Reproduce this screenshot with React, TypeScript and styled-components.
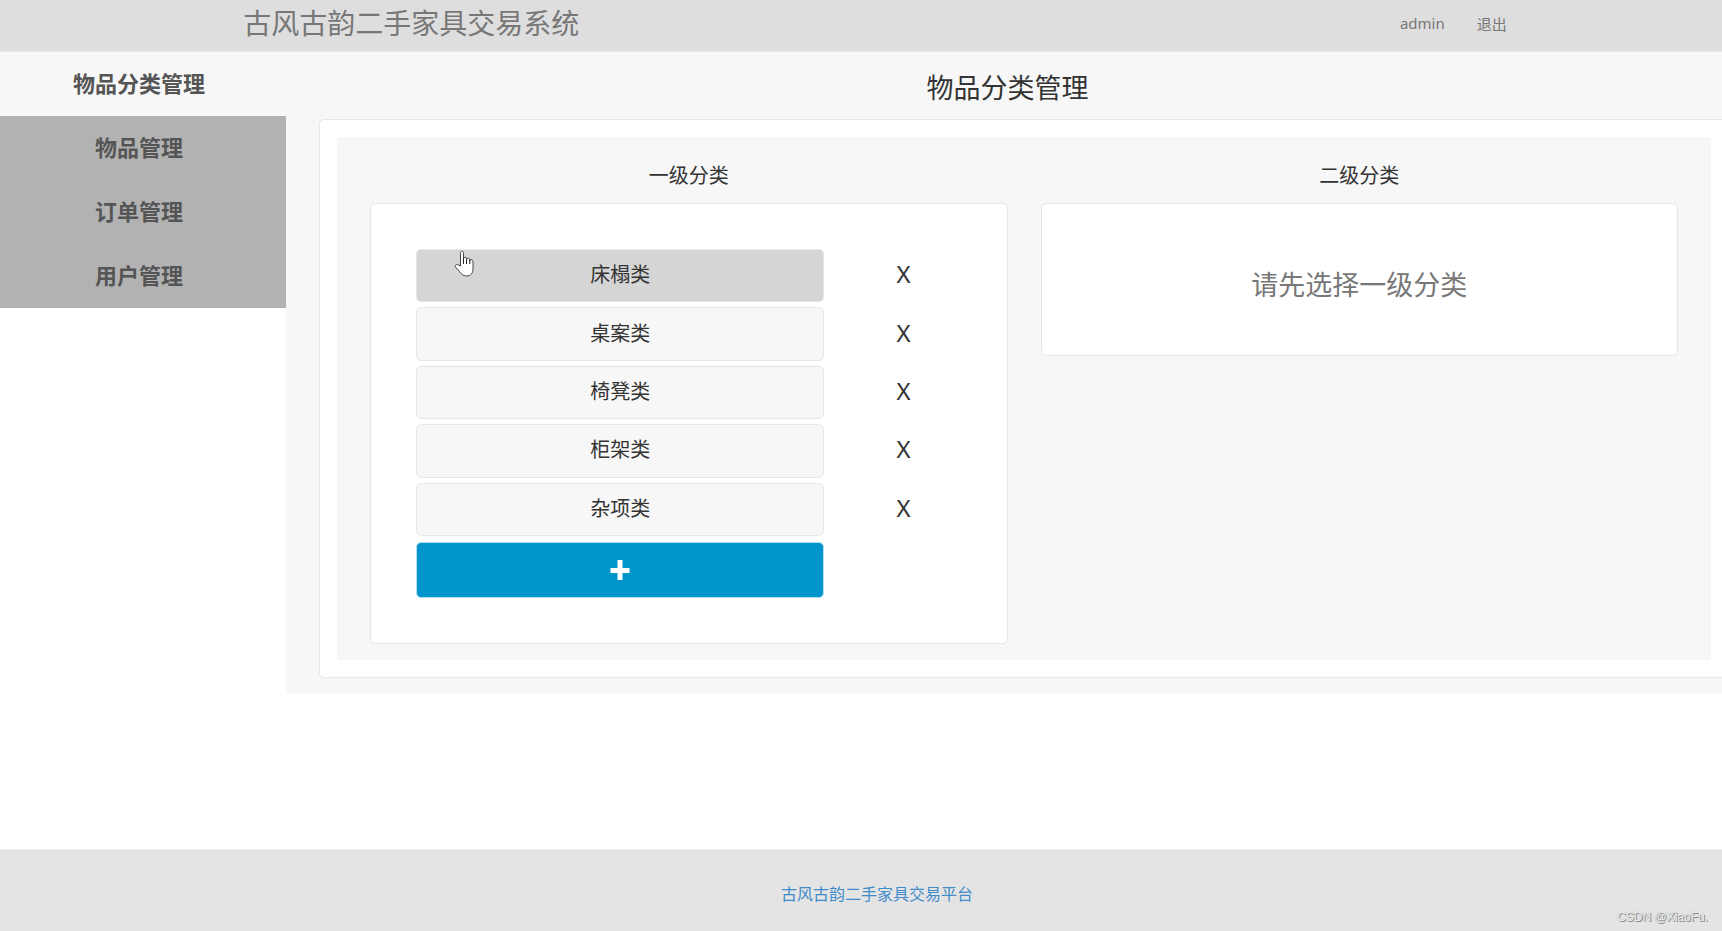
import React, { useState } from "react";
import styled, { createGlobalStyle } from "styled-components";

const GlobalStyle = createGlobalStyle`
  *, *::before, *::after { box-sizing: border-box; }
  body {
    margin: 0;
    background: #fff;
    color: #333;
    font-family: "Noto Sans", "Noto Sans CJK SC", sans-serif;
    font-size: 16px;
  }
  h1, h2, p, ul { margin: 0; padding: 0; font-weight: 400; }
  ul { list-style: none; }
  a { color: inherit; text-decoration: none; }
  button { font: inherit; color: inherit; cursor: pointer; }
`;

const Page = styled.div`
  display: flex;
  flex-direction: column;
  min-height: 100vh;
  overflow: hidden;
`;

const Header = styled.header`
  height: 52px;
  background: #dedede;
  border-bottom: 1px solid #e7e7e7;
  color: #777;
`;

const HeaderInner = styled.div`
  display: flex;
  align-items: center;
  justify-content: space-between;
  width: 75%;
  height: 46px;
  margin: 0 auto;
  padding-left: 28px;
`;

const Brand = styled.a`
  font-size: 28px;
  line-height: 46px;
`;

const UserNav = styled.nav`
  display: flex;
  gap: 32px;
  font-size: 15px;
`;

const Body = styled.div`
  display: flex;
  align-items: flex-start;
`;

const Sidebar = styled.nav`
  flex: 0 0 286px;
`;

const SideLink = styled.a<{ $active?: boolean }>`
  display: block;
  height: 64px;
  padding-right: 8px;
  background: ${(p) => (p.$active ? "#f7f7f7" : "#b2b2b2")};
  color: #555;
  font-size: 22px;
  font-weight: 700;
  line-height: 62px;
  text-align: center;
`;

const Main = styled.main`
  flex: 1;
  min-width: 0;
  margin-right: -7px;
  padding-bottom: 16px;
  background: #f7f7f7;
`;

const PageTitle = styled.h1`
  padding-top: 16px;
  height: 67px;
  font-size: 27px;
  line-height: 40px;
  text-align: center;
`;

const Frame = styled.section`
  margin-left: 33px;
  padding: 17px;
  background: #fff;
  border: 1px solid #e7e7e7;
  border-radius: 5px;
`;

const Columns = styled.div`
  display: grid;
  grid-template-columns: 1fr 1fr;
  align-items: start;
  gap: 33px;
  padding: 23px 33px 16px;
  background: #f7f7f7;
`;

const ColumnTitle = styled.h2`
  margin-bottom: 11px;
  font-size: 20px;
  line-height: 32px;
  text-align: center;
`;

const Panel = styled.div`
  padding: 45px;
  background: #fff;
  border: 1px solid #e7e7e7;
  border-radius: 5px;
`;

const Notice = styled.p`
  padding: 16px 0 5px;
  color: #777;
  font-size: 27px;
  line-height: 40px;
  text-align: center;
`;

const CategoryList = styled.ul`
  display: grid;
  grid-auto-rows: 1fr;
  gap: 5px;
  min-height: 287px;
  margin-bottom: 6px;
`;

const Row = styled.li`
  display: grid;
  grid-template-columns: 17fr 5fr;
  column-gap: 17px;
`;

const CategoryButton = styled.button<{ $selected: boolean }>`
  padding: 0 0 4px;
  background: ${(p) => (p.$selected ? "#d5d5d5" : "#f7f7f7")};
  border: 1px solid #e7e7e7;
  border-radius: 5px;
  font-size: 20px;
`;

const RemoveButton = styled.button`
  padding: 0 0 4px 4px;
  background: none;
  border: 0;
  font-size: 24px;
`;

const AddButton = styled.button`
  display: flex;
  align-items: center;
  justify-content: center;
  height: 56px;
  background: #0096cc;
  border: 1px solid #b5e0f0;
  border-radius: 5px;
`;

const Footer = styled.footer`
  display: flex;
  flex-direction: column;
  height: 82px;
  margin-top: auto;
  padding-top: 32px;
  background: #e4e4e4;
  border-top: 1px solid #eee;
  text-align: center;
`;

const FooterLink = styled.a`
  align-self: center;
  padding-left: 32px;
  color: #428bca;
  line-height: 24px;
`;

const Credit = styled.small`
  align-self: flex-end;
  margin-right: 14px;
  color: #eee;
  font-family: "Liberation Sans", sans-serif;
  font-size: 12px;
  line-height: 22px;
  text-shadow: 1px 1px 0 #888, 0 0 1px #999;
`;

const Pointer = styled.svg`
  position: absolute;
  top: 250px;
  left: 454px;
  pointer-events: none;
`;

const sections = ["物品分类管理", "物品管理", "订单管理", "用户管理"];
const categories = ["床榻类", "桌案类", "椅凳类", "柜架类", "杂项类"];

export default function App() {
  const [selected, setSelected] = useState(0);

  return (
    <Page>
      <GlobalStyle />
      <Header>
        <HeaderInner>
          <Brand href="#">古风古韵二手家具交易系统</Brand>
          <UserNav>
            <a href="#admin">admin</a>
            <a href="#logout">退出</a>
          </UserNav>
        </HeaderInner>
      </Header>
      <Body>
        <Sidebar>
          {sections.map((name, i) => (
            <SideLink key={name} href={`#section-${i}`} $active={i === 0}>
              {name}
            </SideLink>
          ))}
        </Sidebar>
        <Main>
          <PageTitle>物品分类管理</PageTitle>
          <Frame>
            <Columns>
              <div>
                <ColumnTitle>一级分类</ColumnTitle>
                <Panel>
                  <CategoryList>
                    {categories.map((name, i) => (
                      <Row key={name}>
                        <CategoryButton $selected={i === selected} onClick={() => setSelected(i)}>
                          {name}
                        </CategoryButton>
                        <RemoveButton aria-label={`删除${name}`}>X</RemoveButton>
                      </Row>
                    ))}
                  </CategoryList>
                  <Row as="div">
                    <AddButton aria-label="添加分类">
                      <svg width="20" height="20" viewBox="0 0 20 20" fill="#fff">
                        <path d="M7.500 0h5v8H19.500v5h-7V20h-5v-7H.5V8h7z" />
                      </svg>
                    </AddButton>
                  </Row>
                </Panel>
              </div>
              <div>
                <ColumnTitle>二级分类</ColumnTitle>
                <Panel>
                  <Notice>请先选择一级分类</Notice>
                </Panel>
              </div>
            </Columns>
          </Frame>
        </Main>
      </Body>
      <Footer>
        <FooterLink href="#">古风古韵二手家具交易平台</FooterLink>
        <Credit>CSDN @XiaoFu.</Credit>
      </Footer>
      <Pointer width="22" height="28" viewBox="0 0 22 28" aria-hidden="true">
        <path
          d="M6.5 16V3.200C6.500 .6 9.500 .6 9.500 3.200V9.500C9.500 6.500 12.500 6.800 12.500 8.500V10C12.500 7.500 15.800 7.800 15.800 9.500V11C15.800 9 19 9.300 19 11.500V18.500C19 23 17 26 12.500 26C9 26 7.500 24 5.500 21.500L1.500 17C.5 15 3 13.800 4.500 15Z"
          fill="#fff"
          stroke="#444"
          strokeWidth="1"
          strokeLinejoin="round"
        />
        <path d="M9.500 8v6M12.500 9v5M15.800 10v4" stroke="#222" strokeWidth="1" fill="none" />
      </Pointer>
    </Page>
  );
}
